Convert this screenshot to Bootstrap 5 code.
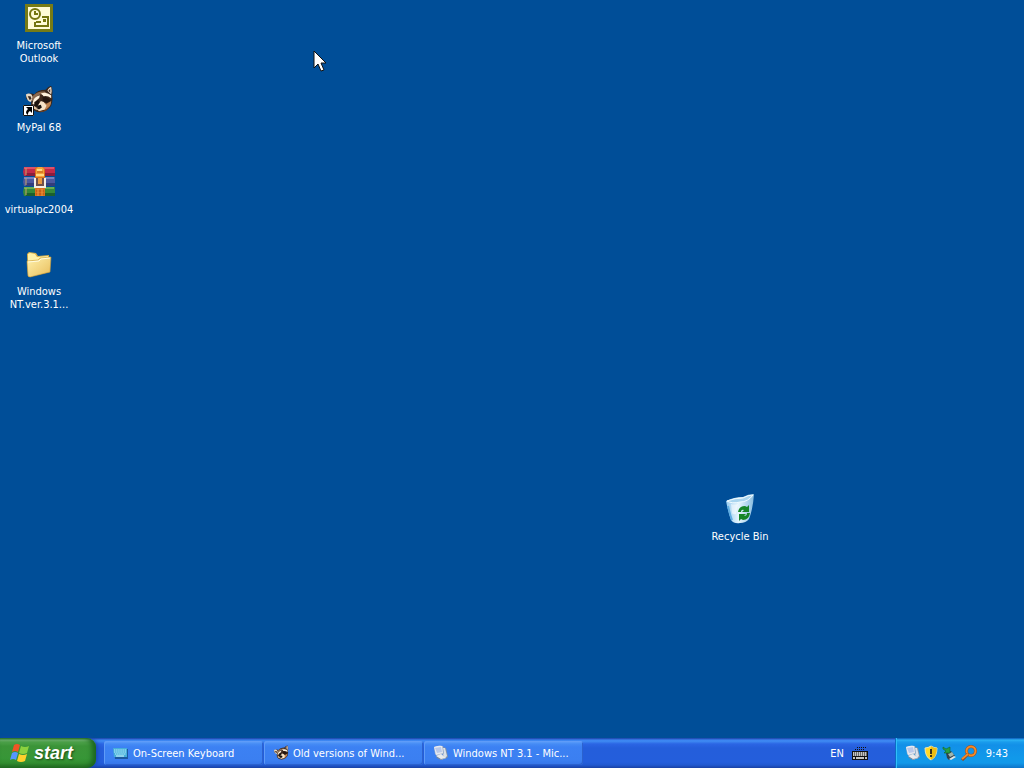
<!DOCTYPE html>
<html lang="en">
<head>
<meta charset="utf-8">
<meta name="viewport" content="width=device-width, initial-scale=1">
<title>Desktop</title>
<link href="https://cdn.jsdelivr.net/npm/bootstrap@5.3.0/dist/css/bootstrap.min.css" rel="stylesheet">
<style>
  body { background: #004e98; color: #fff; font: 11px/13px "DejaVu Sans Condensed", "Noto Sans", sans-serif; cursor: default; }
  svg { display: block; flex: none; }
  .shortcut { width: 78px; height: 82px; padding: 2px 0 0; gap: 5px; font: inherit; color: #fff; border: 0; background: none; }
  .shortcut:focus-visible { outline: 1px dotted #fff; }
  .bin-place { left: 701px; top: 491px; }
  .pointer-place { left: 313px; top: 50px; pointer-events: none; }
  .taskbar { height: 30px; background: linear-gradient(#1941a5 0, #3a80f0 2px, #3f8cf3 3px, #2b65e4 6px, #245edb 10px, #245edc 24px, #2159d0 27px, #1941a5 30px); }
  .start-btn { width: 96px; padding: 0 0 0 10px; gap: 4px; border: 0; border-radius: 0 9px 9px 0; color: #fff; font: italic bold 18px/26px "Liberation Sans", sans-serif; text-shadow: 1px 1px 2px #1d4a14;
    background: linear-gradient(#2d7a2b 0, #78b977 2px, #4ea24b 4px, #3b9438 8px, #379637 20px, #328e30 25px, #236c22 30px); box-shadow: inset -4px 0 5px #1c661f, 1px 0 4px #1745a8; }
  .tasks { gap: 1px; padding: 3px 0 3px 8px; }
  .task-btn { width: 159px; height: 24px; padding: 0 8px; gap: 4px; border: 0; border-radius: 3px; color: #fff; font: inherit; text-align: left;
    background: linear-gradient(#62a3fb 0, #458bf5 3px, #3c81f3 6px, #3b7ff1 19px, #3574e8 24px); box-shadow: inset 1px 1px 0 #5f9cf8, inset -1px -1px 0 #2b62ce; }
  .lang { gap: 8px; padding-right: 26px; }
  .tray { width: 129px; padding: 0 16px 0 9px; gap: 3px; border-left: 1px solid #0d6cc4; box-shadow: inset 1px 0 0 #2fc0fb;
    background: linear-gradient(#0c59b9 0, #2bb2f5 2px, #1a9cec 4px, #1290e8 7px, #1199ea 20px, #1198e9 25px, #0d73c8 30px); }
</style>
</head>
<body>
<svg width="0" height="0" class="position-absolute" aria-hidden="true">
  <defs>
    <symbol id="raccoon" viewBox="0 2 32 28">
      <path d="M3 10q5-2 8 0 3-5 12-5 3-4 6-4 2 4 1 10 1 6-1 11-4 6-12 7-6 0-9-5-1-4 0-7-5 0-6-4z" fill="#3a261b"/>
      <path d="M2 10q3-2 6 0l2 4-3 4q-4-1-5-8z" fill="#e7d8c3"/>
      <path d="M4 12l3 0 1 3-2 1z" fill="#3b2920"/>
      <path d="M25 6q2-4 4-4 1 4 0 8z" fill="#f0decb"/><path d="M26 6l2-2 0 4z" fill="#4d3023"/>
      <path d="M10 11q5-5 12-4l3 2-6 1q-5 0-9 6l-2 2q0-4 2-7z" fill="#8c6a50"/>
      <path d="M10 16q2-4 7-5l2 1-4 3q-3 2-4 6l-2-1z" fill="#fff1dc"/>
      <path d="M18 9q6-2 11 2l0 3q-4-3-8-2z" fill="#fff1dc"/>
      <path d="M17 10l3 1-2 6-3 4z" fill="#422a1e"/>
      <path d="M11 18l4-2 2 3-2 4-4-1z" fill="#1d120d"/>
      <path d="M20 13q6-1 8 4l-4 2-4-2z" fill="#24150f"/>
      <path d="M20 18l4 2 5-3q0 6-5 9l-5 1-1-5z" fill="#be8453"/>
      <path d="M18 17l3 1 3 4-2 4-6 2-3-3 3-5z" fill="#f6e2c7"/>
      <path d="M14 22l4-1 1 3-3 2-2-1z" fill="#17100d"/>
      <path d="M9 21l4 3 1 3-4-2z" fill="#e6c7a4"/>
      <path d="M17 28q6 0 10-5-2 6-10 6z" fill="#704223"/>
    </symbol>
    <symbol id="pc" viewBox="0 0 16 16">
      <path d="M1 2q5-2 9-1l1 8-7 2-2-2z" fill="#a8b6c9"/>
      <path d="M1 2q5-2 8-1l1 7-7 2z" fill="#e5e9f1"/>
      <path d="M2 3l6-1 1 5-5 1z" fill="#b9c8e9"/>
      <path d="M10 2l3 1 2 9-3 2-3-3 2-3z" fill="#8391a4"/>
      <path d="M10 3l2 0 2 8-2 2-2-3 1-2z" fill="#dbe1e8"/>
      <path d="M3 11l5-2 5 4-5 2z" fill="#e9ebed"/>
      <path d="M3 11l5 3 5-1-5 2-4-2z" fill="#76869c"/>
    </symbol>
  </defs>
</svg>

<div class="d-flex flex-column vh-100 overflow-hidden position-relative">
  <main class="flex-grow-1 d-flex flex-column align-items-start">
    <button class="shortcut d-flex flex-column align-items-center">
      <svg width="32" height="32" viewBox="0 0 32 32">
        <path d="M2 2h28v28H2z" fill="#777b16"/><path d="M5 5h22v22H5z" fill="#fffbd6"/>
        <circle cx="12" cy="12" r="5" fill="#fffbd6" stroke="#74750f" stroke-width="2"/>
        <path d="M12 9v3h3" fill="none" stroke="#74750f" stroke-width="2"/>
        <path d="M12 20v4h13v-9h-6M13 20h5" fill="none" stroke="#74750f" stroke-width="2"/>
        <path d="M20 17h3v3h-3z" fill="#74750f"/>
      </svg>
      <span>Microsoft<br>Outlook</span>
    </button>
    <button class="shortcut d-flex flex-column align-items-center">
      <svg width="32" height="32" viewBox="0 0 32 32">
        <use href="#raccoon" x="1" y="2" width="30" height="28"/>
        <path d="M0 21h11v11H0z" fill="#fff"/><path d="M.5 21.500h10v10H.5z" fill="none" stroke="#111"/>
        <path d="M3 23h6v6l-2-2c-2 1-2 2-2 4-3-2-2-4 0-6z" fill="#000"/>
      </svg>
      <span>MyPal 68</span>
    </button>
    <button class="shortcut d-flex flex-column align-items-center">
      <svg width="32" height="32" viewBox="0 0 32 32">
        <path d="M1 1h31v9H1l-1-4z" fill="#c22a4a"/><path d="M1 1h30v2H1z" fill="#dc5269"/><path d="M3 7h29v3H3z" fill="#8c1d3d"/>
        <path d="M1 11h31v9H1l-1-4z" fill="#4d589f"/><path d="M1 11h30v2H1z" fill="#7583c0"/><path d="M3 17h29v3H3z" fill="#343d7b"/>
        <path d="M1 21h31v9H1l-1-4z" fill="#35893a"/><path d="M1 21h30v2H1z" fill="#68ad54"/><path d="M3 27h29v3H3z" fill="#1c602d"/>
        <path d="M3 2v7M3 12v7M3 22v7" stroke="#c6a269" stroke-width="1"/>
        <path d="M12 2l2-1h6l2 2v27H12z" fill="#d9701d"/>
        <path d="M13 3l2-2h4l2 2v8h-8z" fill="#f3a23a"/><path d="M14 3h5v2h-5zM13 8h8v2h-8z" fill="#ffd982"/><path d="M14 6h6" stroke="#bd5415"/>
        <path d="M11 12h12v10H11z" fill="#f5eee5"/><path d="M13 12h2v6h4v-6h2v8h-8z" fill="#71504b"/><path d="M15 12h4v6h-4z" fill="#e99840"/>
        <path d="M13 25h8M13 28h8" stroke="#b15016"/><path d="M15 23v7M19 23v7" stroke="#ed9b45"/>
      </svg>
      <span>virtualpc2004</span>
    </button>
    <button class="shortcut d-flex flex-column align-items-center">
      <svg width="32" height="32" viewBox="0 0 32 32">
        <defs><linearGradient id="fold" x2="1" y2="1"><stop stop-color="#fff2ae"/><stop offset="1" stop-color="#e8bd5b"/></linearGradient></defs>
        <path d="M4 6l2-2 7 1 2 3 11-1 1 17-21 5-1-1z" fill="#d8af48"/>
        <path d="M5 6l2-1 5 1 2 3 11-1v5L5 15z" fill="#fff1a7"/>
        <path d="M4 13l11-1 2-2 11-1-1 15-20 5-2-1z" fill="url(#fold)" stroke="#c99b38" stroke-width=".6"/>
        <path d="M5 14l11-1 2-2 9-1" fill="none" stroke="#fffce0"/>
      </svg>
      <span>Windows<br>NT.ver.3.1...</span>
    </button>
  </main>

  <button class="shortcut bin-place position-absolute d-flex flex-column align-items-center">
    <svg width="32" height="32" viewBox="0 0 32 32">
      <defs><linearGradient id="glass"><stop stop-color="#94caef"/><stop offset=".45" stop-color="#e6f5fd"/><stop offset="1" stop-color="#86bbdf"/></linearGradient></defs>
      <path d="M2 8Q10 4 19 4q5-3 11-3-1 15-5 25-3 4-9 4-6 1-9-3Q4 18 2 8z" fill="url(#glass)"/>
      <path d="M3 8q8-3 16-3 5-3 10-3-5 7-13 7Q8 11 3 8z" fill="#a9d5ef" stroke="#effaff"/>
      <path d="M4 13q2 9 4 14" fill="none" stroke="#5fade2" stroke-width="2"/>
      <path d="M7 11q3 1 7 0l-2 10q-3 1-4-1z" fill="#fff" opacity=".5"/>
      <path d="M14 19q1-6 7-6l2 1 2-2v7h-7l2-2q-3-1-3 2zM26 20q-1 7-7 7l-2-1-2 2v-7h7l-2 2q3 0 3-3z" fill="#168528"/>
    </svg>
    <span>Recycle Bin</span>
  </button>

  <svg class="pointer-place position-absolute" width="14" height="22" viewBox="0 0 14 22" aria-hidden="true"><path d="M1 1v17l4-4 3 7 3-1-3-7h5z" fill="#fff" stroke="#111"/></svg>

  <footer class="taskbar d-flex flex-shrink-0">
    <button class="start-btn d-flex align-items-center">
      <svg width="20" height="20" viewBox="0 0 20 20">
        <path d="M4 2q3-2 6 0L8 9Q5 7 2 9z" fill="#ef5525"/><path d="M11 3q4 2 8 0l-2 7q-4 2-8 0z" fill="#8bd13f"/>
        <path d="M2 10q3-2 6 0l-2 7q-3-2-6 0z" fill="#5597ff"/><path d="M9 11q4 2 8 0l-2 7q-4 2-8 0z" fill="#ffd02c"/>
      </svg><span>start</span>
    </button>
    <nav class="tasks d-flex flex-grow-1" aria-label="Open windows">
      <button class="task-btn d-flex align-items-center">
        <svg width="17" height="16" viewBox="0 0 17 16"><path d="M2 4h14v10H3z" fill="#1c59a0"/><path d="M1 3h14v9H2z" fill="#45aeda"/><path d="M2 5h12M2 7h12M3 9h11" stroke="#bceffb" stroke-dasharray="1.500 .6"/><path d="M4 11h8" stroke="#d9f8ff"/></svg>
        <span>On-Screen Keyboard</span>
      </button>
      <button class="task-btn d-flex align-items-center">
        <svg width="17" height="16"><use href="#raccoon" x="1" width="16" height="16"/></svg>
        <span>Old versions of Wind...</span>
      </button>
      <button class="task-btn d-flex align-items-center">
        <svg width="17" height="16"><use href="#pc" x="1" width="16" height="16"/></svg>
        <span>Windows NT 3.1 - Mic...</span>
      </button>
    </nav>
    <div class="lang d-flex align-items-center">
      <span>EN</span>
      <svg width="17" height="16" viewBox="0 0 17 16"><path d="M3 4.500h9M5 2.500h9" fill="none" stroke="#111" stroke-dasharray="1 1"/><path d="M0 6h16v9H0z" fill="#111"/><path d="M1 8h14M1 10h14" stroke="#fff" stroke-width="1.500" stroke-dasharray="1.500 .5"/><path d="M1 13h2m1 0h8m1 0h2" stroke="#fff" stroke-width="1.500"/></svg>
    </div>
    <div class="tray d-flex align-items-center">
      <svg width="16" height="16"><use href="#pc" width="16" height="16"/></svg>
      <svg width="15" height="16" viewBox="0 0 15 16"><path d="M7 1q3 2 6 2 0 9-6 12Q1 12 1 3q3 0 6-2z" fill="#ffd926" stroke="#ece7b3"/><path d="M7 1q3 2 6 2 0 9-6 12z" fill="#dca600" opacity=".55"/><path d="M7 4v5M7 10v2" stroke="#3b321b" stroke-width="2"/></svg>
      <svg width="16" height="16" viewBox="0 0 16 16"><path d="M4 8l5-2 4 5-6 4-2-2z" fill="#33414a"/><path d="M6 9l4-2 2 3-4 2z" fill="#9eb6b0"/><path d="M7 14l5-3 2 1-5 3z" fill="#e2e6e5"/><path d="M1 2l3 2 4-2 0 6-6 0 2-2-3-2z" fill="#25a044" stroke="#116629" stroke-width=".6"/></svg>
      <svg width="16" height="16" viewBox="0 0 16 16"><circle cx="10" cy="6" r="4.500" fill="none" stroke="#9d4c18" stroke-width="3"/><circle cx="10" cy="6" r="4.500" fill="none" stroke="#f28a28" stroke-width="2"/><path d="M7 9l-6 6" stroke="#974613" stroke-width="3"/><path d="M7 9l-6 5" stroke="#f18a2d" stroke-width="2"/></svg>
      <time class="ms-auto" datetime="09:43">9:43</time>
    </div>
  </footer>
</div>
<script src="https://cdn.jsdelivr.net/npm/bootstrap@5.3.0/dist/js/bootstrap.bundle.min.js"></script>
</body>
</html>
